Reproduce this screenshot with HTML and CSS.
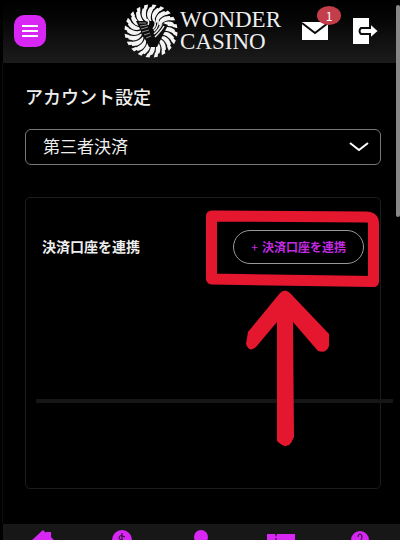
FILE: index.html
```html
<!DOCTYPE html>
<html lang="ja">
  <head>
    <meta charset="UTF-8" />
    <meta name="viewport" content="width=device-width, initial-scale=1.0" />
    <title>アカウント設定</title>
    <link rel="stylesheet" href="styles.css">
  </head>
  <body>
    <div class="app">
      <header>
        <button class="btn-menu" aria-label="メニュー">
          <svg width="16" height="12" viewBox="0 0 16 12">
            <path d="M0 1h16M0 6h16M0 11h16" stroke="#fff" stroke-width="2" />
          </svg>
        </button>
        <a class="logo" href="#">
          <svg width="54" height="54" viewBox="-27 -27 54 54">
            <defs>
              <!-- One curved blade with its stepped tip -->
              <g id="blade">
                <path d="M-1 -10C-5 -14 -5 -19 -1 -24L3 -23C0 -18 -1 -14 0.500 -10Z" />
                <path d="M1.500 -26.500L5.500 -26L3 -22L0 -23Z" />
              </g>
              <g id="blades">
                <use href="#blade" />
                <use href="#blade" transform="rotate(18)" />
                <use href="#blade" transform="rotate(36)" />
                <use href="#blade" transform="rotate(54)" />
                <use href="#blade" transform="rotate(72)" />
              </g>
            </defs>
            <g fill="#f4f4f4">
              <use href="#blades" />
              <use href="#blades" transform="rotate(90)" />
              <use href="#blades" transform="rotate(180)" />
              <use href="#blades" transform="rotate(270)" />
            </g>
            <!-- Twisted centre -->
            <path d="M-15 -10L-5 -10L4 9L12 -8L17 -6L6 16L-2 16Z" fill="#0d0d0d" />
            <g fill="none" stroke="#eee" stroke-width="1.500">
              <path d="M2 -2C5 -5 5 -8 3 -12M3 0C7 -4 8 -7 7 -12M3 3C8 -1 10 -5 11 -10M4 6C8 2 11 -1 13 -5" />
              <path d="M-3 -6C-2 -8 -2 -10 -4 -12" />
            </g>
            <g fill="none" stroke="#8c8c8c" stroke-width="1">
              <path d="M-12 -8L-5 -8M-11 -5L-4 -6M-10 -2L-3 -4M-9 1L-2 -1M-7 4L-1 2M-5 7L0 5" />
            </g>
          </svg>
          <span class="logo-text">WONDER<br />CASINO</span>
        </a>
        <a class="mail" href="#" aria-label="メッセージ">
          <svg width="26" height="18" viewBox="0 0 26 18">
            <path d="M0 0h26v18H0z" fill="#fff" />
            <path d="M0 1l13 10L26 1" fill="none" stroke="#0b0b0b" stroke-width="2" />
          </svg>
          <span class="badge">1</span>
        </a>
        <a class="logout" href="#" aria-label="ログアウト">
          <svg width="26" height="26" viewBox="0 0 26 26">
            <path d="M0 0h16v26H0z" fill="#fff" />
            <path d="M8 10h9V5l9 8l-9 8v-5H8q-3-3 0-6z" fill="#fff" stroke="#0d0d0d" stroke-width="2" />
          </svg>
        </a>
      </header>

      <main>
        <h1><label for="settings">アカウント設定</label></h1>
        <div class="select-box">
          <select id="settings">
            <option>第三者決済</option>
          </select>
          <svg class="chevron" width="20" height="10" viewBox="0 0 20 10">
            <path d="M1 1l9 7l9-7" fill="none" stroke="#fff" stroke-width="2" />
          </svg>
        </div>

        <section class="card">
          <div class="card-row">
            <h2>決済口座を連携</h2>
            <button class="btn-link"><span class="plus">+</span>決済口座を連携</button>
          </div>
          <hr />
          <!-- Hand-drawn frame and arrow over the button -->
          <svg class="marker" width="190" height="250" viewBox="200 205 190 250">
            <path d="M211.500 216L366 217Q373.500 217 373.500 223V281.500L211.500 279Z" fill="none" stroke="#e5172f" stroke-width="11" stroke-linejoin="round" />
            <path d="M280 293Q285 288 290 293L329 334V346Q326 354 318 351L293 322L294 437L291 443Q286 450 277 441V322L256 347Q249 353 246 344L248 332Z" fill="#e5172f" />
          </svg>
        </section>
      </main>

      <nav>
        <a href="#" aria-label="ホーム">
          <svg width="24" height="24" viewBox="0 0 24 24">
            <path d="M12 1L0 12h4v10h16V12h4l-4-4V3h-5v1z" />
          </svg>
        </a>
        <a href="#" aria-label="入金">
          <svg width="24" height="24" viewBox="0 0 24 24">
            <circle cx="12" cy="11" r="10" />
            <path d="M15 8q-6-3-6 1q0 2 3 2q4 1 3 4q-2 2-6 0M12 4v14" fill="none" stroke="#171717" stroke-width="1" />
          </svg>
        </a>
        <a href="#" aria-label="プロフィール">
          <svg width="24" height="24" viewBox="0 0 24 24">
            <circle cx="12" cy="8" r="7" />
            <path d="M1 24q1-9 11-9t11 9z" />
          </svg>
        </a>
        <a href="#" aria-label="プロモーション">
          <svg width="28" height="24" viewBox="0 0 28 24">
            <path d="M0 5h8l1 3l1-3h18v16H0z" />
            <path d="M9 9v9" stroke="#171717" stroke-width="1" />
          </svg>
        </a>
        <a href="#" aria-label="サポート">
          <svg width="24" height="24" viewBox="0 0 24 24">
            <circle cx="12" cy="11" r="9" />
            <path d="M10 8q0-3 2-3t2 3q0 2-2 4v3" fill="none" stroke="#171717" stroke-width="1" />
          </svg>
        </a>
      </nav>
      <div class="scrollbar"></div>
    </div>
  </body>
</html>
```

FILE: styles.css
```css
* {
  margin: 0;
  padding: 0;
  box-sizing: border-box;
}

body {
  background-color: #000;
  color: #eee;
  font-family: "Noto Sans CJK JP", sans-serif;
  overflow: hidden;
}

svg {
  display: block;
}

.app {
  position: relative;
  display: flex;
  flex-direction: column;
  height: 100vh;
  padding-left: 3px;
}

header {
  display: flex;
  align-items: center;
  height: 63px;
  padding: 0 21px 2px 11px;
  background: linear-gradient(#000, #050505 30%, #1c1c1c);
}

.btn-menu {
  display: flex;
  align-items: center;
  justify-content: center;
  width: 32px;
  height: 32px;
  background-color: #d826f5;
  border: none;
  border-radius: 10px;
  cursor: pointer;
}

.logo {
  display: flex;
  align-items: center;
  gap: 2px;
  margin-left: auto;
  color: #eee;
  text-decoration: none;
}

.logo-text {
  font-family: "Liberation Serif", serif;
  font-size: 23px;
  line-height: 22px;
}

.mail {
  position: relative;
  margin-left: 21px;
}

.badge {
  position: absolute;
  top: -16px;
  right: -13px;
  width: 24px;
  height: 19px;
  background-color: #c33e4b;
  border-radius: 50%;
  color: #fff;
  font-size: 12px;
  line-height: 19px;
  text-align: center;
}

.logout {
  margin-left: 25px;
}

main {
  flex: 1;
  min-height: 0;
  padding: 20px 19px 0 22px;
  border-left: 1px solid #0c0c0c;
  margin-left: -1px;
}

h1 {
  margin-bottom: 20px;
  font-size: 18px;
  font-weight: 500;
  line-height: 26px;
}

.select-box {
  position: relative;
  margin-bottom: 32px;
}

select {
  display: block;
  width: 100%;
  height: 36px;
  padding: 0 17px 4px;
  appearance: none;
  background-color: #000;
  border: 1px solid #777;
  border-radius: 6px;
  color: #eee;
  font-family: inherit;
  font-size: 17px;
}

.chevron {
  position: absolute;
  top: 13px;
  right: 12px;
  pointer-events: none;
}

.card {
  position: relative;
  height: 292px;
  padding: 32px 16px;
  border: 1px solid #1c1c1c;
  border-radius: 5px;
}

.card-row {
  display: flex;
  align-items: center;
  justify-content: space-between;
}

h2 {
  padding-bottom: 2px;
  font-size: 14px;
  font-weight: 700;
}

.btn-link {
  height: 34px;
  padding: 0 17px 2px;
  background-color: #000;
  border: 1px solid #999;
  border-radius: 17px;
  color: #c02be0;
  font-family: inherit;
  font-size: 12px;
  font-weight: 700;
  cursor: pointer;
}

.plus {
  margin-right: 4px;
  font-weight: 400;
}

hr {
  height: 4px;
  margin: 135px -29px 0 -6px;
  background-color: #161616;
  border: none;
}

.marker {
  position: absolute;
  top: 7px;
  right: -10px;
  pointer-events: none;
}

/* Bottom bar, peeking in from the lower edge */
nav {
  display: grid;
  grid-template-columns: repeat(5, 1fr);
  justify-items: center;
  height: 16px;
  padding-top: 5px;
  overflow: hidden;
  background-color: #171717;
}

nav svg {
  fill: #d826f5;
}

.scrollbar {
  position: absolute;
  top: 5px;
  right: 0;
  width: 4px;
  height: 212px;
  background-color: #888;
  border-radius: 2px;
}
```
